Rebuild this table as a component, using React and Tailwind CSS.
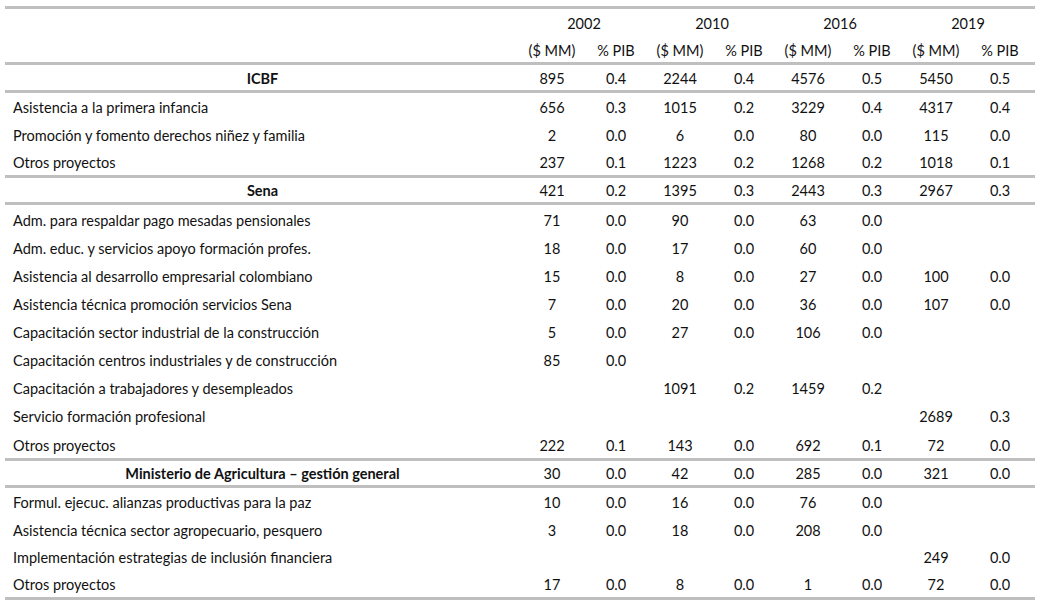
import React from 'react';

// Gasto por entidad: ICBF, Sena y Ministerio de Agricultura
const sections = [
  {
    name: 'ICBF',
    total: ['895', '0.4', '2244', '0.4', '4576', '0.5', '5450', '0.5'],
    groupH: 'h-[82px]',
    rows: [
      ['Asistencia a la primera infancia', '656', '0.3', '1015', '0.2', '3229', '0.4', '4317', '0.4'],
      ['Promoción y fomento derechos niñez y familia', '2', '0.0', '6', '0.0', '80', '0.0', '115', '0.0'],
      ['Otros proyectos', '237', '0.1', '1223', '0.2', '1268', '0.2', '1018', '0.1'],
    ],
  },
  {
    name: 'Sena',
    total: ['421', '0.2', '1395', '0.3', '2443', '0.3', '2967', '0.3'],
    groupH: 'h-[253px]',
    rows: [
      ['Adm. para respaldar pago mesadas pensionales', '71', '0.0', '90', '0.0', '63', '0.0', '', ''],
      ['Adm. educ. y servicios apoyo formación profes.', '18', '0.0', '17', '0.0', '60', '0.0', '', ''],
      ['Asistencia al desarrollo empresarial colombiano', '15', '0.0', '8', '0.0', '27', '0.0', '100', '0.0'],
      ['Asistencia técnica promoción servicios Sena', '7', '0.0', '20', '0.0', '36', '0.0', '107', '0.0'],
      ['Capacitación sector industrial de la construcción', '5', '0.0', '27', '0.0', '106', '0.0', '', ''],
      ['Capacitación centros industriales y de construcción', '85', '0.0', '', '', '', '', '', ''],
      ['Capacitación a trabajadores y desempleados', '', '', '1091', '0.2', '1459', '0.2', '', ''],
      ['Servicio formación profesional', '', '', '', '', '', '', '2689', '0.3'],
      ['Otros proyectos', '222', '0.1', '143', '0.0', '692', '0.1', '72', '0.0'],
    ],
  },
  {
    name: 'Ministerio de Agricultura – gestión general',
    total: ['30', '0.0', '42', '0.0', '285', '0.0', '321', '0.0'],
    groupH: 'h-[109px]',
    rows: [
      ['Formul. ejecuc. alianzas productivas para la paz', '10', '0.0', '16', '0.0', '76', '0.0', '', ''],
      ['Asistencia técnica sector agropecuario, pesquero', '3', '0.0', '18', '0.0', '208', '0.0', '', ''],
      ['Implementación estrategias de inclusión financiera', '', '', '', '', '', '', '249', '0.0'],
      ['Otros proyectos', '17', '0.0', '8', '0.0', '1', '0.0', '72', '0.0'],
    ],
  },
];

const years = ['2002', '2010', '2016', '2019'];

const Rule = () => <div className="h-[3px] w-full bg-[#bfbfbf]" />;

const Cells = ({ values }) =>
  values.map((v, i) => (
    <div key={i} className="w-16 text-center">
      {v}
    </div>
  ));

export default function App() {
  return (
    <div
      className="w-[1043px] h-[604px] bg-white pt-[6px] pl-[5px] text-[14.5px] text-[#111]"
      style={{ fontFamily: 'Lato, "Open Sans", sans-serif' }}
    >
      <div className="w-[1030px]">
        <Rule />

        {/* Header */}
        <div className="h-[53px] flex flex-col">
          <div className="h-[26px] flex items-center pt-[3px]">
            <div className="w-[515px]" />
            {years.map((y) => (
              <div key={y} className="w-32 text-center">
                {y}
              </div>
            ))}
          </div>
          <div className="h-[27px] flex items-end">
            <div className="w-[515px]" />
            {years.map((y) => (
              <React.Fragment key={y}>
                <div className="w-16 text-center">($ MM)</div>
                <div className="w-16 text-center">% PIB</div>
              </React.Fragment>
            ))}
          </div>
        </div>

        {sections.map((s, si) => (
          <div key={s.name}>
            <Rule />
            <div className={`${si === 0 ? 'h-[25px]' : 'h-[24px]'} flex items-center pt-[2px]`}>
              <div className="w-[515px] text-center font-bold">{s.name}</div>
              <Cells values={s.total} />
            </div>
            <Rule />
            <div className={`${s.groupH} flex flex-col`}>
              {s.rows.map((r, ri) => (
                <div key={ri} className="flex-1 flex items-center pt-[3px]">
                  <div className="w-[515px] pl-2">{r[0]}</div>
                  <Cells values={r.slice(1)} />
                </div>
              ))}
            </div>
          </div>
        ))}
        <Rule />
      </div>
    </div>
  );
}
